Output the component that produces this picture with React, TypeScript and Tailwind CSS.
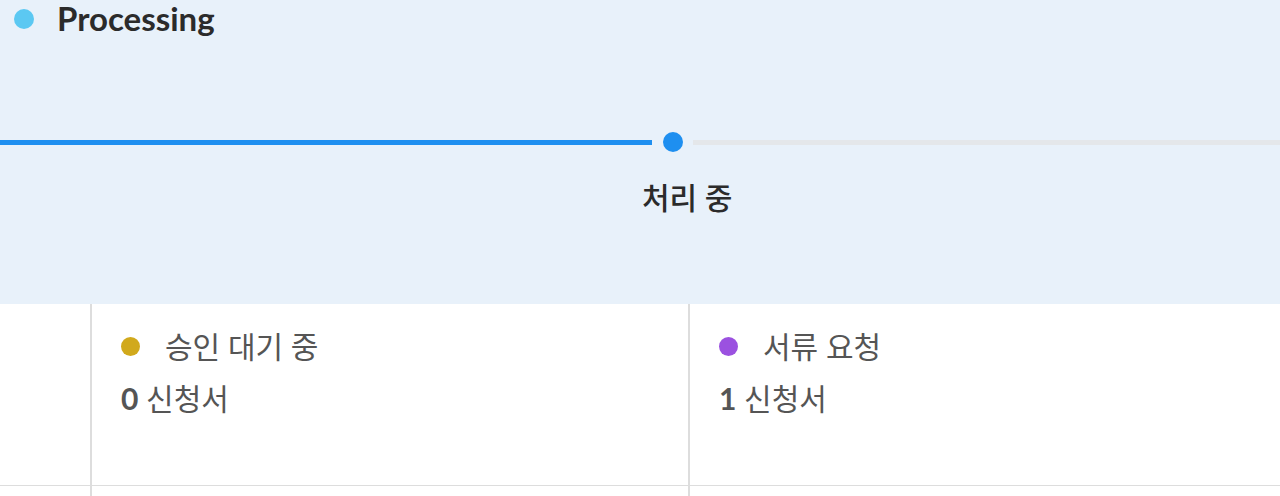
const FONT = "font-['Lato','Noto_Sans_CJK_KR',sans-serif]";

const cards = [
  { label: "승인 대기 중", count: 0, dot: "bg-[#d1a91c]" },
  { label: "서류 요청", count: 1, dot: "bg-[#9b51e0]" },
];

export default function App() {
  return (
    <div className={`w-[1280px] h-[496px] overflow-hidden bg-white ${FONT}`}>
      {/* status panel */}
      <div className="h-[304px] bg-[#e8f1fa] flex flex-col">
        <div className="flex items-center h-[38px] pl-[14px] gap-[23px]">
          <span className="w-[20px] h-[20px] rounded-full bg-[#5bc8f2]" />
          <span className="text-[33px] font-bold text-[#2b2b2b] leading-[36px] pb-[3px]">
            Processing
          </span>
        </div>

        <div className="mt-[94px] flex items-center h-[20px]">
          <div className="w-[652px] h-[5px] bg-[#1e8ff0]" />
          <div className="ml-[11px] w-[20px] h-[20px] rounded-full bg-[#1e8ff0]" />
          <div className="ml-[10px] flex-1 h-[5px] bg-[#e4e7ea]" />
        </div>

        <div className="mt-[30px] pl-[642px] text-[30px] font-medium text-[#2b2b2b] leading-none">
          처리 중
        </div>
      </div>

      {/* counts */}
      <div className="grid grid-cols-[90px_598px_1fr]">
        <div className="h-[182px] border-b border-[#dddddd]" />
        {cards.map((c) => (
          <div
            key={c.label}
            className="h-[182px] border-l-2 border-b border-[#dddddd] pl-[29px] pt-[27px] text-[#555555]"
          >
            <div className="flex items-center gap-[25px] h-[30px]">
              <span className={`w-[19px] h-[19px] rounded-full ${c.dot}`} />
              <span className="text-[30px] leading-none">{c.label}</span>
            </div>
            <div className="mt-[22px] text-[30px] leading-none">
              <span className="font-bold">{c.count}</span> 신청서
            </div>
          </div>
        ))}
        <div className="h-[20px]" />
        <div className="h-[20px] border-l-2 border-[#dddddd]" />
        <div className="h-[20px] border-l-2 border-[#dddddd]" />
      </div>
    </div>
  );
}
